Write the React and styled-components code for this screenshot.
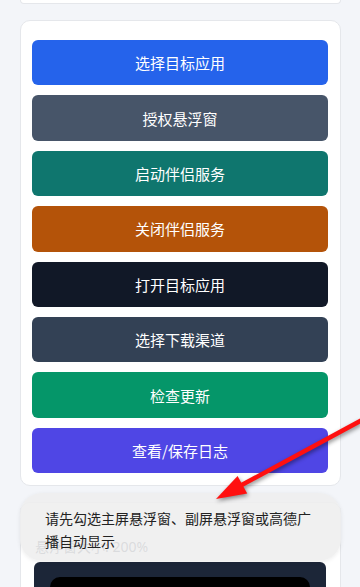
import React from "react";
import styled, { createGlobalStyle } from "styled-components";

const GlobalStyle = createGlobalStyle`
  html, body {
    margin: 0;
    padding: 0;
    background: #f3f5f9;
    font-family: "Noto Sans", "Noto Sans CJK SC", sans-serif;
  }
`;

const Screen = styled.div`
  position: relative;
  width: 360px;
  height: 587px;
  overflow: hidden;
  background: #f3f5f9;
`;

const Page = styled.div`
  display: flex;
  flex-direction: column;
  gap: 16px;
  padding: 0 19px 0 20px;
`;

const Card = styled.div`
  background: #ffffff;
  border: 1px solid #e5e7eb;
  border-radius: 10px;
  box-sizing: border-box;
`;

// the card above, scrolled almost out of view
const CutCard = styled(Card)`
  height: 4px;
  border-top: none;
  border-radius: 0 0 10px 10px;
`;

const ButtonCard = styled(Card)`
  display: flex;
  flex-direction: column;
  gap: 10px;
  padding: 19px 12px 12px 11px;
`;

const ActionButton = styled.button`
  height: 45.4px;
  border: none;
  border-radius: 6px;
  background: ${(p) => p.$bg};
  color: #ffffff;
  font-family: "Noto Sans CJK SC", sans-serif;
  font-size: 15px;
  display: flex;
  align-items: center;
  justify-content: center;
  cursor: pointer;
`;

const SizeCard = styled(Card)`
  padding: 34px 14px 0 13px;
  height: 120px;
`;

const SizeLabel = styled.div`
  font-size: 14px;
  line-height: 20px;
  color: #4b5563;
  margin-left: 1px;
`;

const Preview = styled.div`
  margin-top: 5px;
  background: #1c2638;
  border-radius: 6px;
  padding: 15px 16px;
`;

const PreviewScreen = styled.div`
  height: 120px;
  background: #000000;
  border-radius: 10px;
`;

const Toast = styled.div`
  position: absolute;
  left: 20px;
  top: 493px;
  width: 321px;
  box-sizing: border-box;
  padding: 14px 25px 9px 25px;
  background: rgba(238, 238, 238, 0.88);
  border-radius: 22px;
  box-shadow: 0 1px 4px rgba(0, 0, 0, 0.08);
  color: #222222;
  font-family: "Noto Sans CJK SC", sans-serif;
  font-size: 14px;
  line-height: 22.5px;
`;

const Annotation = styled.svg`
  position: absolute;
  left: 0;
  top: 0;
  width: 360px;
  height: 587px;
  pointer-events: none;
  filter: drop-shadow(1px 2px 2px rgba(0, 0, 0, 0.45));
`;

const actions = [
  { label: "选择目标应用", bg: "#2563eb" },
  { label: "授权悬浮窗", bg: "#475569" },
  { label: "启动伴侣服务", bg: "#0f766e" },
  { label: "关闭伴侣服务", bg: "#b45309" },
  { label: "打开目标应用", bg: "#111827" },
  { label: "选择下载渠道", bg: "#334155" },
  { label: "检查更新", bg: "#059669" },
  { label: "查看/保存日志", bg: "#4f46e5" },
];

export default function App() {
  return (
    <Screen>
      <GlobalStyle />
      <Page>
        <CutCard />
        <ButtonCard>
          {actions.map((a) => (
            <ActionButton key={a.label} $bg={a.bg}>
              {a.label}
            </ActionButton>
          ))}
        </ButtonCard>
        <SizeCard>
          <SizeLabel>悬浮窗大小: 200%</SizeLabel>
          <Preview>
            <PreviewScreen />
          </Preview>
        </SizeCard>
      </Page>

      <Toast>请先勾选主屏悬浮窗、副屏悬浮窗或高德广播自动显示</Toast>

      <Annotation viewBox="0 0 360 587">
        <line x1="364" y1="419" x2="238" y2="487" stroke="#ff1010" strokeWidth="4.5" />
        <polygon points="216,499 237.6,475.9 247.2,493.5" fill="#ff1010" />
      </Annotation>
    </Screen>
  );
}
